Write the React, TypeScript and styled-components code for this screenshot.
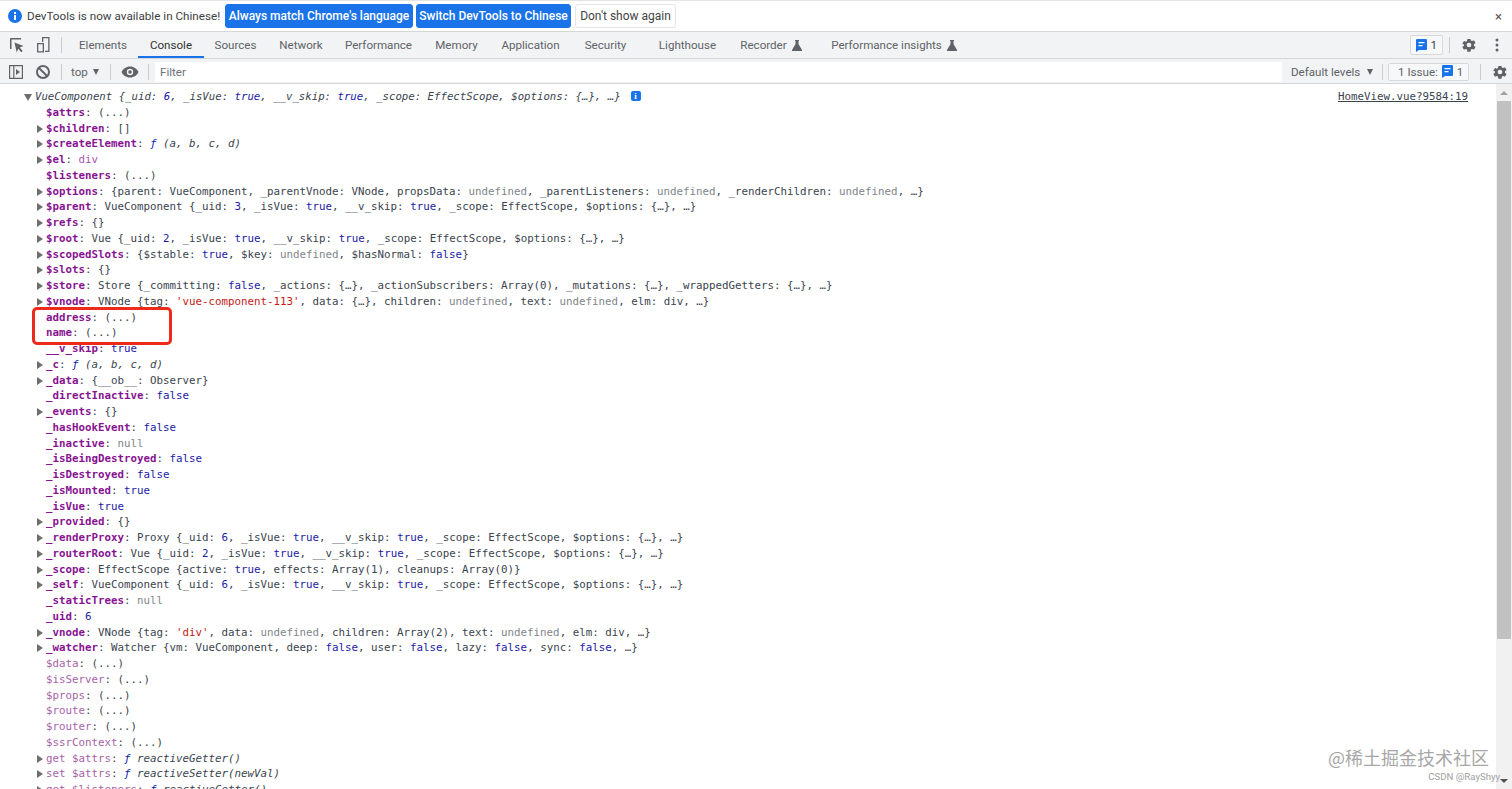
import React from 'react'
import styled, { createGlobalStyle } from 'styled-components'

const GlobalStyle = createGlobalStyle`
  html, body {
    margin: 0;
    padding: 0;
    height: 100%;
    overflow: hidden;
    background: #fff;
  }
  #root {
    height: 100%;
  }
`

const Page = styled.div`
  position: relative;
  display: flex;
  flex-direction: column;
  height: 789px;
  font-family: Roboto, "Liberation Sans", Arial, sans-serif;
  font-size: 11.6px;
  color: #5f6368;
  overflow: hidden;
`

const InfoBar = styled.div`
  display: flex;
  align-items: center;
  height: 30px;
  flex: none;
  padding: 0 10px 0 8px;
  border-top: 1px solid #e4e4e4;
  color: #3c4043;
`

const InfoIcon = styled.svg`
  width: 14px;
  height: 14px;
  margin-right: 5px;
`

const InfoText = styled.span`
  width: 198px;
  white-space: nowrap;
  font-size: 11.7px;
`

const InfoButton = styled.button<{ $primary?: boolean; $w: number; $gap: number }>`
  width: ${p => p.$w}px;
  height: 24px;
  padding: 0;
  margin-right: ${p => p.$gap}px;
  border-radius: 3px;
  font: ${p => (p.$primary ? 500 : 400)} 12px Roboto, "Liberation Sans", Arial, sans-serif;
  color: ${p => (p.$primary ? '#fff' : '#444')};
  background: ${p => (p.$primary ? '#1a73e8' : '#fff')};
  border: 1px solid ${p => (p.$primary ? '#1a73e8' : '#e3e5e8')};
`

const CloseMark = styled.span`
  margin-left: auto;
  font-size: 13px;
  color: #555;
`

const TabBar = styled.div`
  display: flex;
  align-items: center;
  flex: none;
  height: 26px;
  background: #f1f3f4;
  border-top: 1px solid #d4d6d8;
  border-bottom: 1px solid #d4d6d8;
  padding-left: 8px;
`

const ToolIcon = styled.svg`
  width: 18px;
  height: 18px;
  flex: none;
  margin-right: 8px;
`

const FilterIcon = styled(ToolIcon)`
  margin-right: 9px;
`

const Divider = styled.div<{ $ml?: number }>`
  width: 1px;
  height: 16px;
  margin-left: ${p => p.$ml ?? 0}px;
  background: #ccc;
  flex: none;
`

const TabList = styled.div`
  display: flex;
  align-items: stretch;
  height: 100%;
  margin-left: 6px;
`

const Tab = styled.div<{ $active?: boolean; $w: number }>`
  display: flex;
  align-items: center;
  justify-content: center;
  gap: 5px;
  width: ${p => p.$w}px;
  box-sizing: border-box;
  color: ${p => (p.$active ? '#333' : '#5f6368')};
  border-bottom: 2px solid ${p => (p.$active ? '#1a73e8' : 'transparent')};
  padding-top: 2px;
`

const TabRight = styled.div`
  display: flex;
  align-items: center;
  margin-left: auto;
  padding-right: 13px;
`

const IssueBadge = styled.div`
  display: flex;
  align-items: center;
  gap: 3px;
  height: 18px;
  padding: 0 5px 0 5px;
  border: 1px solid #d6d8da;
  border-radius: 2px;
  background: #f6f8f9;
  color: #444;
`

const TabGear = styled.svg`
  width: 16px;
  height: 16px;
  margin-left: 11px;
`

const KebabIcon = styled.svg`
  width: 4px;
  height: 14px;
  margin-left: 18px;
`

const FilterBar = styled.div`
  display: flex;
  align-items: center;
  flex: none;
  height: 23px;
  padding-top: 1px;
  background: #f1f3f4;
  border-bottom: 1px solid #d4d6d8;
  padding-left: 7px;
`

const TopSelect = styled.div`
  display: flex;
  align-items: center;
  gap: 5px;
  width: 30px;
  margin: 0 9px;
`

const EyeIcon = styled.svg`
  width: 18px;
  height: 14px;
  margin: 0 9px 0 10px;
  flex: none;
`

const Caret = styled.span`
  width: 0;
  height: 0;
  border-left: 3.5px solid transparent;
  border-right: 3.5px solid transparent;
  border-top: 6px solid #5f6368;
`

const FilterInput = styled.div`
  width: 1127px;
  height: 20px;
  margin-left: 6px;
  padding-left: 5px;
  box-sizing: border-box;
  display: flex;
  align-items: center;
  background: #fff;
  color: #6d7175;
`

const LevelSelect = styled.div`
  display: flex;
  align-items: center;
  justify-content: space-between;
  width: 82px;
  margin: 0 9px;
`

const IssueCount = styled(IssueBadge)`
  gap: 4px;
  width: 81px;
  height: 18px;
  box-sizing: border-box;
  padding: 0 0 0 9px;
  margin-left: 5px;
  color: #5f6368;
`

const FilterGear = styled.svg`
  width: 16px;
  height: 16px;
  margin-left: 11px;
`

const Body = styled.div`
  position: relative;
  flex: 1;
  min-height: 0;
  display: flex;
  overflow: hidden;
`

const Log = styled.div`
  position: relative;
  flex: 1;
  min-width: 0;
  padding-top: 5px;
  font-family: "DejaVu Sans Mono", "Liberation Mono", monospace;
  font-size: 10.8px;
  line-height: 15.76px;
  color: #3a444e;
`

const Row = styled.div<{ $header?: boolean }>`
  position: relative;
  height: 15.76px;
  white-space: pre;
  padding-left: ${p => (p.$header ? 35 : 46)}px;
  font-style: ${p => (p.$header ? 'italic' : 'normal')};
  font-size: ${p => (p.$header ? 10.7 : 10.8)}px;
`

const Arrow = styled.span<{ $open?: boolean; $header?: boolean }>`
  position: absolute;
  left: ${p => (p.$header ? 24 : 37)}px;
  top: 4px;
  width: 0;
  height: 0;
  ${p =>
    p.$open
      ? `border-left: 4px solid transparent; border-right: 4px solid transparent; border-top: 7px solid #6e6e6e; top: 5px;`
      : `border-top: 4px solid transparent; border-bottom: 4px solid transparent; border-left: 6px solid #6e6e6e;`}
`

const Key = styled.span<{ $dim?: boolean }>`
  color: ${p => (p.$dim ? '#a762a7' : '#881391')};
  font-weight: ${p => (p.$dim ? 400 : 700)};
`

const Keyword = styled.span`
  color: #1a1aa6;
`

const Str = styled.span`
  color: #c41a16;
`

const Dim = styled.span`
  color: #80868b;
`

const Tag = styled.span`
  color: #881391;
  opacity: 0.75;
`

const Func = styled.span`
  font-style: italic;
`

const FuncMark = styled.span`
  font-style: italic;
  color: #0d22aa;
`

const InfoChip = styled.span`
  display: inline-block;
  position: relative;
  top: -1px;
  width: 10px;
  height: 10px;
  margin-left: 10px;
  border-radius: 2px;
  background: #1a73e8;
  color: #fff;
  font: bold 9px/10px "Liberation Serif", serif;
  text-align: center;
`

const Source = styled.a`
  position: absolute;
  top: 5px;
  right: 28px;
  color: #3a444e;
  text-decoration: underline;
`

const Highlight = styled.div`
  position: absolute;
  left: 32px;
  top: 223px;
  width: 134px;
  height: 32px;
  border: 3px solid #ee2a1b;
  border-radius: 5px;
`

const Scrollbar = styled.div`
  flex: none;
  width: 16px;
  display: flex;
  flex-direction: column;
  background: #f1f1f1;
`

const ScrollButton = styled.div<{ $down?: boolean }>`
  height: 17px;
  flex: none;
  display: flex;
  align-items: center;
  justify-content: center;
  margin-top: ${p => (p.$down ? 'auto' : '0')};

  &::before {
    content: '';
    width: 0;
    height: 0;
    border-left: 4px solid transparent;
    border-right: 4px solid transparent;
    ${p => (p.$down ? 'border-top: 4px solid #505050;' : 'border-bottom: 4px solid #a3a3a3;')}
  }
`

const ScrollThumb = styled.div`
  height: 538px;
  margin: 0 1px;
  background: #c1c1c1;
`

const WatermarkMain = styled.div`
  position: absolute;
  right: 23px;
  bottom: 20px;
  font-family: "Noto Sans CJK SC", "Liberation Sans", sans-serif;
  font-size: 18px;
  line-height: 24px;
  color: #8a8a8a;
  opacity: 0.75;
`

const WatermarkSub = styled.div`
  position: absolute;
  right: 12px;
  bottom: 6px;
  font-size: 9.6px;
  line-height: 12px;
  color: #a0a0a0;
`

const renderValue = (text: string) => {
  const parts = text.split(/(\btrue\b|\bfalse\b|\bnull\b|\bundefined\b|'[^']*'|: \d+)/)
  return parts.map((part, i) => {
    if (part === 'true' || part === 'false') return <Keyword key={i}>{part}</Keyword>
    if (part === 'undefined' || part === 'null') return <Dim key={i}>{part}</Dim>
    if (part.startsWith("'")) return <Str key={i}>{part}</Str>
    if (/^: \d+$/.test(part)) {
      return (
        <React.Fragment key={i}>
          {': '}
          <Keyword>{part.slice(2)}</Keyword>
        </React.Fragment>
      )
    }
    return <React.Fragment key={i}>{part}</React.Fragment>
  })
}

type Item = {
  name: string
  value: React.ReactNode
  expand?: boolean
  dim?: boolean
}

const fn = (sig: string) => (
  <>
    <FuncMark>ƒ</FuncMark> <Func>{sig}</Func>
  </>
)
const lazy = '(...)'
const preview = (uid: number) => `{_uid: ${uid}, _isVue: true, __v_skip: true, _scope: EffectScope, $options: {…}, …}`

const items: Item[] = [
  { name: '$attrs', value: lazy },
  { name: '$children', value: '[]', expand: true },
  { name: '$createElement', value: fn('(a, b, c, d)'), expand: true },
  { name: '$el', value: <Tag>div</Tag>, expand: true },
  { name: '$listeners', value: lazy },
  { name: '$options', value: renderValue('{parent: VueComponent, _parentVnode: VNode, propsData: undefined, _parentListeners: undefined, _renderChildren: undefined, …}'), expand: true },
  { name: '$parent', value: renderValue(`VueComponent ${preview(3)}`), expand: true },
  { name: '$refs', value: '{}', expand: true },
  { name: '$root', value: renderValue(`Vue ${preview(2)}`), expand: true },
  { name: '$scopedSlots', value: renderValue('{$stable: true, $key: undefined, $hasNormal: false}'), expand: true },
  { name: '$slots', value: '{}', expand: true },
  { name: '$store', value: renderValue('Store {_committing: false, _actions: {…}, _actionSubscribers: Array(0), _mutations: {…}, _wrappedGetters: {…}, …}'), expand: true },
  { name: '$vnode', value: renderValue("VNode {tag: 'vue-component-113', data: {…}, children: undefined, text: undefined, elm: div, …}"), expand: true },
  { name: 'address', value: lazy },
  { name: 'name', value: lazy },
  { name: '__v_skip', value: <Keyword>true</Keyword> },
  { name: '_c', value: fn('(a, b, c, d)'), expand: true },
  { name: '_data', value: '{__ob__: Observer}', expand: true },
  { name: '_directInactive', value: <Keyword>false</Keyword> },
  { name: '_events', value: '{}', expand: true },
  { name: '_hasHookEvent', value: <Keyword>false</Keyword> },
  { name: '_inactive', value: <Dim>null</Dim> },
  { name: '_isBeingDestroyed', value: <Keyword>false</Keyword> },
  { name: '_isDestroyed', value: <Keyword>false</Keyword> },
  { name: '_isMounted', value: <Keyword>true</Keyword> },
  { name: '_isVue', value: <Keyword>true</Keyword> },
  { name: '_provided', value: '{}', expand: true },
  { name: '_renderProxy', value: renderValue(`Proxy ${preview(6)}`), expand: true },
  { name: '_routerRoot', value: renderValue(`Vue ${preview(2)}`), expand: true },
  { name: '_scope', value: renderValue('EffectScope {active: true, effects: Array(1), cleanups: Array(0)}'), expand: true },
  { name: '_self', value: renderValue(`VueComponent ${preview(6)}`), expand: true },
  { name: '_staticTrees', value: <Dim>null</Dim> },
  { name: '_uid', value: <Keyword>6</Keyword> },
  { name: '_vnode', value: renderValue("VNode {tag: 'div', data: undefined, children: Array(2), text: undefined, elm: div, …}"), expand: true },
  { name: '_watcher', value: renderValue('Watcher {vm: VueComponent, deep: false, user: false, lazy: false, sync: false, …}'), expand: true },
  { name: '$data', value: lazy, dim: true },
  { name: '$isServer', value: lazy, dim: true },
  { name: '$props', value: lazy, dim: true },
  { name: '$route', value: lazy, dim: true },
  { name: '$router', value: lazy, dim: true },
  { name: '$ssrContext', value: lazy, dim: true },
  { name: 'get $attrs', value: fn('reactiveGetter()'), expand: true, dim: true },
  { name: 'set $attrs', value: fn('reactiveSetter(newVal)'), expand: true, dim: true },
  { name: 'get $listeners', value: fn('reactiveGetter()'), expand: true, dim: true },
]

const tabs = [
  { label: 'Elements', w: 70 },
  { label: 'Console', w: 66, active: true },
  { label: 'Sources', w: 63 },
  { label: 'Network', w: 68 },
  { label: 'Performance', w: 87 },
  { label: 'Memory', w: 69 },
  { label: 'Application', w: 79 },
  { label: 'Security', w: 71 },
  { label: 'Lighthouse', w: 93 },
  { label: 'Recorder', w: 74, flask: true },
  { label: 'Performance insights', w: 172, flask: true },
]

const Flask = () => (
  <svg width="10" height="11" viewBox="0 0 10 11">
    <path d="M3 0h4v1H6.5v3L10 10v1H0v-1l3.5-6V1H3z" fill="#5f6368" />
  </svg>
)

const MessageIcon = () => (
  <svg width="11" height="13" viewBox="0 0 11 13">
    <path d="M0 1a1 1 0 0 1 1-1h9a1 1 0 0 1 1 1v9a1 1 0 0 1-1 1H3l-3 2z" fill="#1a73e8" />
    <path d="M2.5 3h6v1.3h-6zM2.5 6h4v1.3h-4z" fill="#fff" />
  </svg>
)

const gearPath =
  'M19.4 13a7.5 7.5 0 0 0 0-2l2.1-1.6a.5.5 0 0 0 .1-.6l-2-3.5a.5.5 0 0 0-.6-.2l-2.5 1a7.3 7.3 0 0 0-1.700-1L14.400 3.400a.5.5 0 0 0-.5-.4h-4a.5.5 0 0 0-.5.4L9 6.100a7.300 7.300 0 0 0-1.700 1l-2.500-1a.5.5 0 0 0-.6.2l-2 3.500a.5.5 0 0 0 .1.6L4.400 11a7.500 7.500 0 0 0 0 2l-2.100 1.600a.5.5 0 0 0-.1.6l2 3.500a.5.5 0 0 0 .6.2l2.500-1a7.300 7.300 0 0 0 1.700 1l.4 2.700a.5.5 0 0 0 .5.4h4a.5.5 0 0 0 .5-.4l.4-2.700a7.300 7.300 0 0 0 1.700-1l2.500 1a.5.5 0 0 0 .6-.2l2-3.500a.5.5 0 0 0-.1-.6zM12 15.500a3.500 3.500 0 1 1 0-7 3.500 3.500 0 0 1 0 7z'

export default function App() {
  return (
    <Page>
      <GlobalStyle />
      <InfoBar>
        <InfoIcon viewBox="0 0 14 14">
          <circle cx="7" cy="7" r="7" fill="#1a73e8" />
          <rect x="6" y="6" width="2" height="5" fill="#fff" />
          <rect x="6" y="3" width="2" height="2" fill="#fff" />
        </InfoIcon>
        <InfoText>DevTools is now available in Chinese!</InfoText>
        <InfoButton $primary $w={188} $gap={3}>Always match Chrome's language</InfoButton>
        <InfoButton $primary $w={155} $gap={4}>Switch DevTools to Chinese</InfoButton>
        <InfoButton $w={101} $gap={0}>Don't show again</InfoButton>
        <CloseMark>×</CloseMark>
      </InfoBar>
      <TabBar>
        <ToolIcon viewBox="0 0 18 18">
          <path d="M13 3V2H3a1 1 0 0 0-1 1v10h1.500V3.500H13z" fill="#5f6368" />
          <path d="M6.500 6.500l9 3.500-3.800 1.500 3 3.500-1.500 1.300-3-3.500-1.500 3.700z" fill="#5f6368" />
        </ToolIcon>
        <ToolIcon viewBox="0 0 18 18">
          <path d="M8 1h7.500v15H11v-1.300h3.200V2.300H9.300V6H8z" fill="#5f6368" />
          <path d="M3 7h7v9.500H3zm1.300 1.300v6.900h4.400V8.300z" fill="#5f6368" />
        </ToolIcon>
        <Divider $ml={1} />
        <TabList>
          {tabs.map(t => (
            <Tab key={t.label} $active={t.active} $w={t.w}>
              {t.label}
              {t.flask && <Flask />}
            </Tab>
          ))}
        </TabList>
        <TabRight>
          <IssueBadge>
            <MessageIcon />1
          </IssueBadge>
          <Divider $ml={6} />
          <TabGear viewBox="0 0 24 24">
            <path fill="#5f6368" d={gearPath} />
          </TabGear>
          <KebabIcon viewBox="0 0 4 14">
            <circle cx="2" cy="2" r="1.5" fill="#5f6368" />
            <circle cx="2" cy="7" r="1.5" fill="#5f6368" />
            <circle cx="2" cy="12" r="1.5" fill="#5f6368" />
          </KebabIcon>
        </TabRight>
      </TabBar>
      <FilterBar>
        <FilterIcon viewBox="0 0 18 18">
          <path d="M2 2h14v14H2zm1.200 1.200v11.600h3V3.200zm4.200 0v11.600h7.400V3.200z" fill="#5f6368" />
          <path d="M9 6l4 3-4 3z" fill="#5f6368" />
        </FilterIcon>
        <FilterIcon viewBox="0 0 18 18">
          <circle cx="9" cy="9" r="6" fill="none" stroke="#5f6368" strokeWidth="2" />
          <path d="M5 5l8 8" stroke="#5f6368" strokeWidth="2" />
        </FilterIcon>
        <Divider />
        <TopSelect>
          top
          <Caret />
        </TopSelect>
        <Divider />
        <EyeIcon viewBox="0 0 18 14">
          <path d="M9 1.500C5 1.500 1.800 4 .5 7c1.300 3 4.500 5.500 8.500 5.500S16.200 10 17.500 7C16.200 4 13 1.500 9 1.500z" fill="#5f6368" />
          <circle cx="9" cy="7" r="3.200" fill="#f1f3f4" />
          <circle cx="9" cy="7" r="1.800" fill="#5f6368" />
        </EyeIcon>
        <Divider />
        <FilterInput>Filter</FilterInput>
        <LevelSelect>
          Default levels
          <Caret />
        </LevelSelect>
        <Divider />
        <IssueCount>
          1 Issue:
          <MessageIcon />1
        </IssueCount>
        <Divider $ml={11} />
        <FilterGear viewBox="0 0 24 24">
          <path fill="#5f6368" d={gearPath} />
        </FilterGear>
      </FilterBar>
      <Body>
        <Log>
          <Row $header>
            <Arrow $open $header />
            VueComponent {renderValue('{_uid: 6, _isVue: true, __v_skip: true, _scope: EffectScope, $options: {…}, …}')}
            <InfoChip>i</InfoChip>
          </Row>
          {items.map(item => (
            <Row key={item.name}>
              {item.expand && <Arrow />}
              <Key $dim={item.dim}>{item.name}</Key>: {item.value}
            </Row>
          ))}
          <Source>HomeView.vue?9584:19</Source>
          <Highlight />
        </Log>
        <Scrollbar>
          <ScrollButton />
          <ScrollThumb />
          <ScrollButton $down />
        </Scrollbar>
        <WatermarkMain>@稀土掘金技术社区</WatermarkMain>
        <WatermarkSub>CSDN @RayShyy</WatermarkSub>
      </Body>
    </Page>
  )
}
